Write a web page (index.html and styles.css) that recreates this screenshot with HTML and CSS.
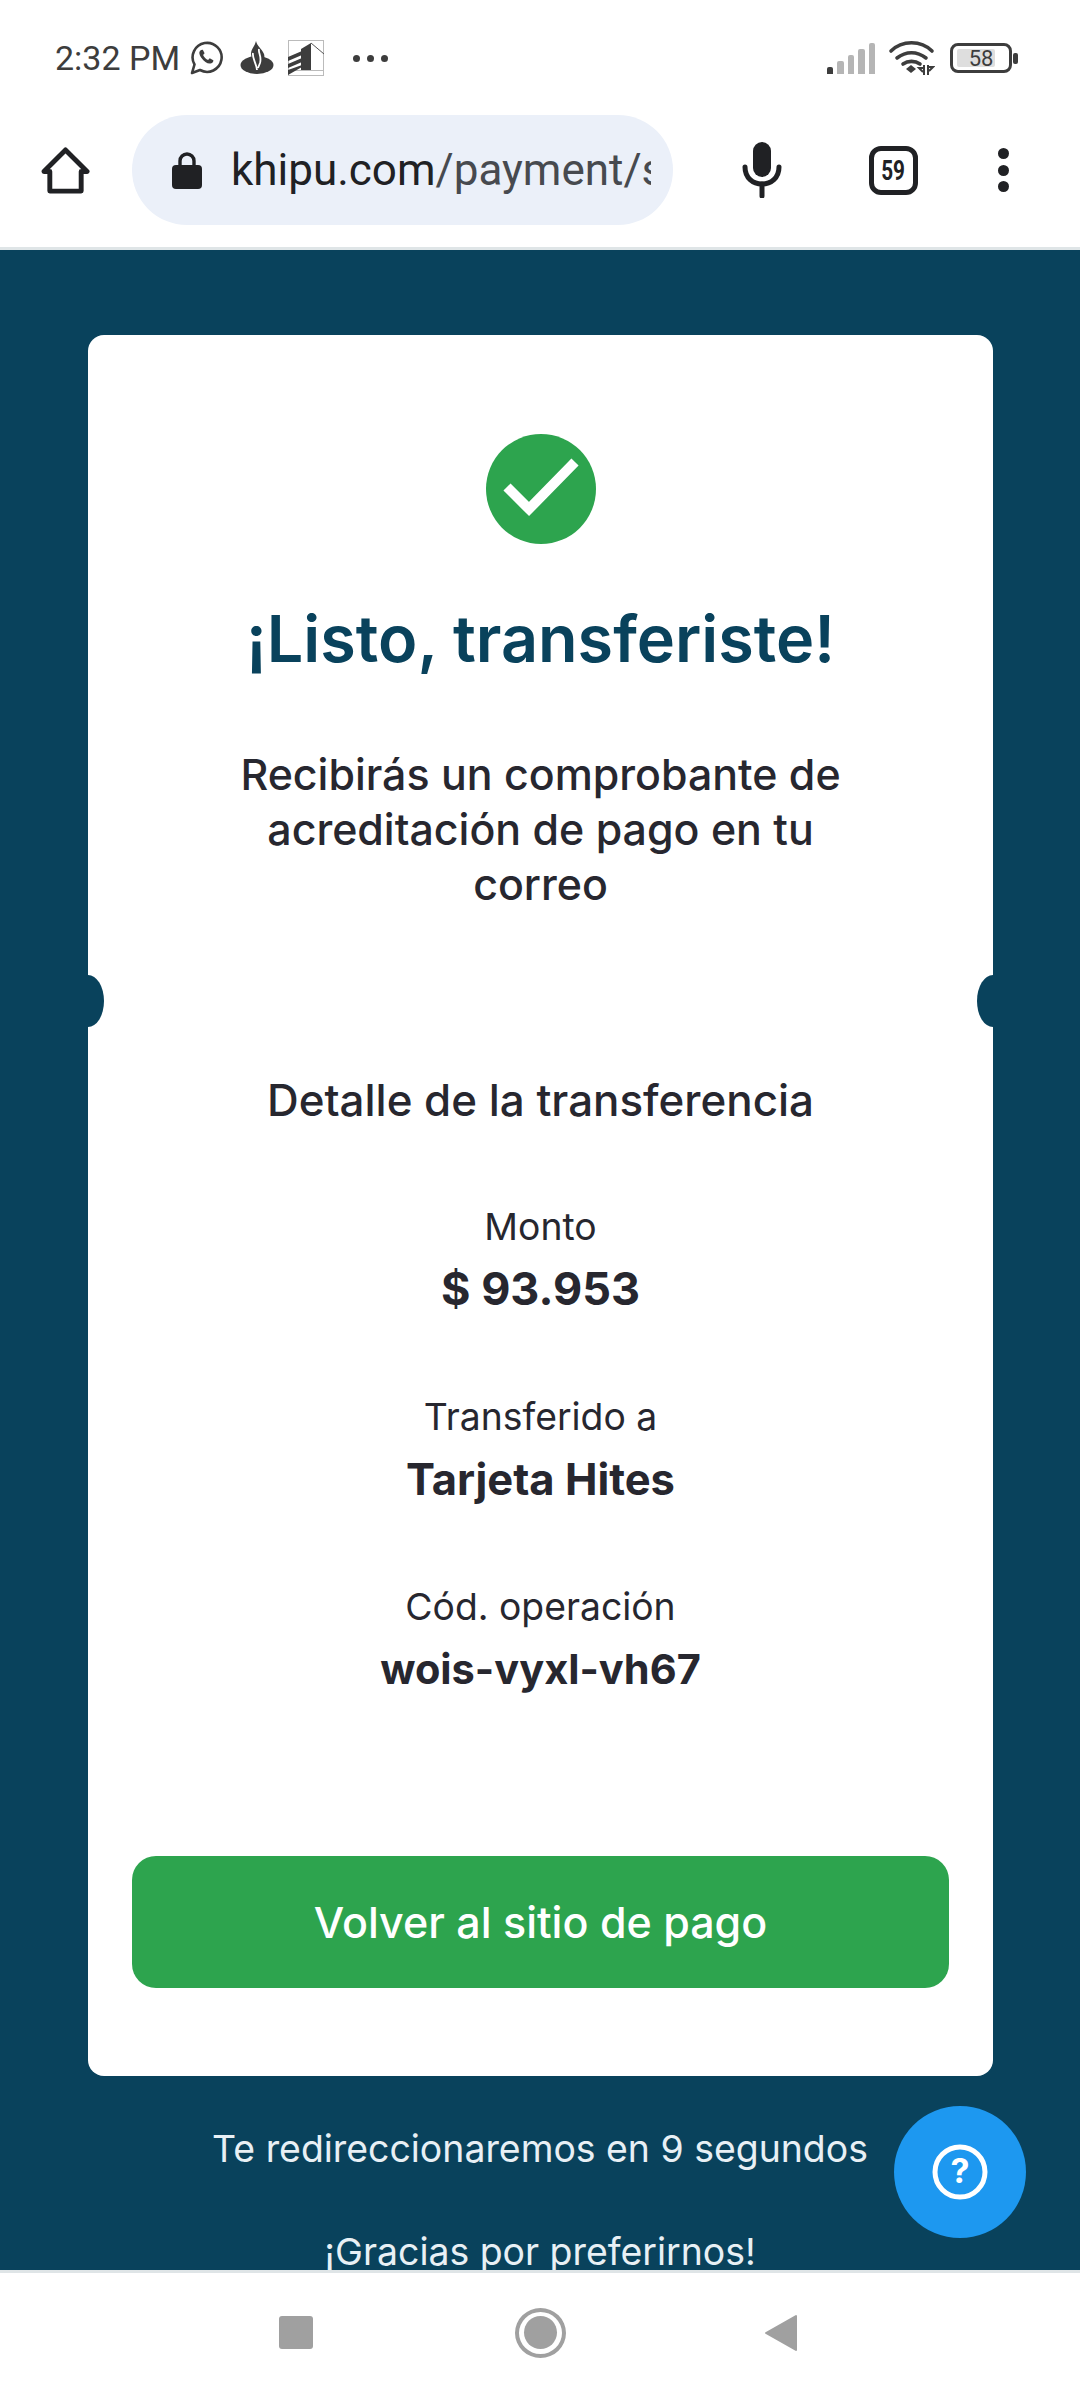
FILE: index.html
```html
<!DOCTYPE html>
<html lang="es">

<head>
    <meta charset="utf-8">
    <meta name="viewport" content="width=device-width, initial-scale=1.0">
    <title>Khipu</title>
    <link rel="stylesheet" href="styles.css">
</head>

<body>

    <section class="status">
        <div class="status-left">
            <span class="hora">2:32 PM</span>
            <svg class="ic-wa" viewBox="0 0 34 34"><path d="M3 32l2.500-8.500A14.500 14.500 0 1 1 11 29Z" fill="none" stroke="#3d3d3d" stroke-width="2.600" stroke-linejoin="round"/><path d="M12 9c-2.500 1.500-2 4.500 .5 8 2.500 3.500 6 6 9 5.500 2.500-.4 3.200-2.400 2.800-3.300l-3.600-1.900-1.600 1.600c-2-.7-4.200-2.900-5-5l1.500-1.700L13.800 8.800Z" fill="#3d3d3d"/></svg>
            <svg class="ic-san" viewBox="0 0 34 34"><ellipse cx="17" cy="24" rx="16.500" ry="9" fill="#3d3d3d"/><path d="M16 0c1 5 6 8 8 13 1 3 0 6-2 9l-3 6c-2-4-8-9-8-15 0-5 4-8 5-13Z" fill="#3d3d3d"/><path d="M13 12c-1 5 3 9 4 17M19 8c-1 4 3 7 1 14l-2 5" fill="none" stroke="#fff" stroke-width="1.800"/></svg>
            <svg class="ic-ban" viewBox="0 0 36 36"><rect x=".5" y=".5" width="35" height="35" fill="none" stroke="#bbb"/><path d="M0 30.500h36" stroke="#bbb"/><path d="M23 3l13 11" stroke="#555"/><path d="M13 9l10-6v27H13Z" fill="#3d3d3d"/><path d="M0 17l14-6v4L0 21Zm0 7l14-6v4L0 28Zm0 6l14-5v2L0 35Z" fill="#3d3d3d"/></svg>
            <span class="puntos"><i></i><i></i><i></i></span>
        </div>
        <div class="status-right">
            <span class="senal"><i></i><i></i><i></i><i></i><i></i></span>
            <svg class="ic-wifi" viewBox="0 0 47 36"><path d="M3 11C14 0 33 0 44 11M9 18c9-7 20-7 29 0M15 24c5-3.500 12-3.500 17 0" fill="none" stroke="#3d3d3d" stroke-width="3.600" stroke-linecap="round"/><path d="M23 25l5 4-5 4-5-4Z" fill="#3d3d3d"/><path d="M36 25v10M35 28h-4l4 4M40 25v10M41 27h4l-4 4" fill="none" stroke="#3d3d3d" stroke-width="2"/></svg>
            <span class="bateria"><span class="nivel"></span><span class="pct">58</span></span>
            <span class="polo"></span>
        </div>
    </section>

    <nav class="toolbar">
        <svg class="ic-home" viewBox="0 0 50 50"><path d="M3 26L25 4l22 22h-6v20H9V26Z" fill="none" stroke="#202124" stroke-width="5" stroke-linejoin="round"/></svg>
        <div class="url">
            <svg class="ic-lock" viewBox="0 0 30 38"><path d="M8 15V10a7 7 0 0 1 14 0v5" fill="none" stroke="#202124" stroke-width="3.400"/><rect y="14" x="0" width="30" height="24" rx="4" fill="#202124"/></svg>
            <div class="url-txt"><span class="dominio">khipu.com</span>/payment/s</div>
        </div>
        <svg class="ic-mic" viewBox="0 0 40 56"><rect x="11" y="0" width="18" height="35" rx="9" fill="#202124"/><path d="M3 25c0 11 8 17 17 17s17-6 17-17" fill="none" stroke="#202124" stroke-width="5" stroke-linecap="round"/><path d="M20 42v12" stroke="#202124" stroke-width="5" stroke-linecap="round"/></svg>
        <div class="tabs"><span>59</span></div>
        <div class="menu-dots"><i></i><i></i><i></i></div>
    </nav>

    <main class="contenido">
        <article class="tarjeta">
            <span class="muesca izq"></span>
            <span class="muesca der"></span>
            <div class="check">
                <svg viewBox="0 0 110 110"><path d="M21 53l22 22 46-47" fill="none" stroke="#fff" stroke-width="10"/></svg>
            </div>
            <h1>¡Listo, transferiste!</h1>
            <p class="aviso">Recibirás un comprobante de acreditación de pago en tu correo</p>
            <h2>Detalle de la transferencia</h2>
            <div class="dato">
                <p class="etiqueta">Monto</p>
                <p class="valor monto">$ 93.953</p>
            </div>
            <div class="dato">
                <p class="etiqueta">Transferido a</p>
                <p class="valor">Tarjeta Hites</p>
            </div>
            <div class="dato">
                <p class="etiqueta">Cód. operación</p>
                <p class="valor codigo">wois-vyxl-vh67</p>
            </div>
            <a class="boton" href="#">Volver al sitio de pago</a>
        </article>
        <p class="redir">Te redireccionaremos en 9 segundos</p>
        <p class="gracias">¡Gracias por preferirnos!</p>
        <button class="ayuda">
            <svg viewBox="0 0 56 56"><circle cx="28" cy="28" r="25" fill="none" stroke="#fff" stroke-width="5"/><text x="28" y="39" text-anchor="middle" class="ayuda-q">?</text></svg>
        </button>
    </main>

    <footer class="navbar">
        <span class="nav-cuadro"></span>
        <span class="nav-circulo"><i></i></span>
        <svg class="nav-atras" viewBox="0 0 34 38"><path d="M32 2v34L2 19Z" fill="#a0a0a0" stroke="#a0a0a0" stroke-width="2" stroke-linejoin="round"/></svg>
    </footer>

</body>

</html>
```

FILE: styles.css
```css
* {
    box-sizing: border-box;
}

body {
    margin: 0;
    width: 1080px;
    height: 2400px;
    overflow: hidden;
    background: #fff;
    font-family: Inter, "Liberation Sans", sans-serif;
    display: flex;
    flex-direction: column;
}

/* barra de estado */
.status {
    height: 80px;
    padding: 40px 0 0 55px;
    display: flex;
    justify-content: space-between;
    align-items: flex-start;
}

.status-left,
.status-right {
    display: flex;
    align-items: center;
    height: 36px;
}

.hora {
    font-family: Roboto, sans-serif;
    font-size: 34px;
    color: #3d3d3d;
    width: 134px;
}

.ic-wa {
    width: 34px;
    height: 34px;
}

.ic-san {
    width: 34px;
    height: 34px;
    margin-left: 17px;
}

.ic-ban {
    width: 36px;
    height: 36px;
    margin-left: 14px;
}

.puntos {
    display: flex;
    gap: 7px;
    margin-left: 29px;
}

.puntos i {
    width: 7px;
    height: 7px;
    border-radius: 50%;
    background: #3d3d3d;
}

.status-right {
    padding-right: 62px;
}

.senal {
    display: flex;
    gap: 4px;
    align-items: flex-end;
    height: 31px;
}

.senal i {
    width: 6.500px;
    background: #b5b5b5;
    border-radius: 2px 2px 0 0;
}

.senal i:nth-child(1) { height: 7px; background: #3d3d3d; }
.senal i:nth-child(2) { height: 13px; }
.senal i:nth-child(3) { height: 19px; }
.senal i:nth-child(4) { height: 25px; }
.senal i:nth-child(5) { height: 31px; }

.ic-wifi {
    width: 47px;
    height: 36px;
    margin-left: 13px;
}

.bateria {
    position: relative;
    width: 62px;
    height: 30px;
    border: 3px solid #3d3d3d;
    border-radius: 8px;
    margin-left: 15px;
    display: flex;
    align-items: center;
    justify-content: center;
}

.nivel {
    position: absolute;
    left: 4px;
    top: 3px;
    bottom: 3px;
    width: 38px;
    background: #dedede;
    border-radius: 2px;
}

.pct {
    position: relative;
    font-family: Roboto, sans-serif;
    font-size: 22px;
    color: #3d3d3d;
}

.polo {
    width: 5px;
    height: 11px;
    margin-left: 1px;
    background: #3d3d3d;
    border-radius: 2px;
}

/* barra del navegador */
.toolbar {
    height: 167px;
    display: flex;
    align-items: center;
    padding: 13px 0 0 41px;
}

.ic-home {
    width: 49px;
    height: 49px;
    flex: none;
}

.url {
    width: 541px;
    height: 110px;
    margin-left: 42px;
    flex: none;
    border-radius: 55px;
    background: #ebf0f9;
    display: flex;
    align-items: center;
    padding-left: 40px;
    overflow: hidden;
}

.ic-lock {
    width: 30px;
    height: 38px;
    flex: none;
}

.url-txt {
    width: 420px;
    margin-left: 29px;
    overflow: hidden;
    white-space: nowrap;
    font-family: Roboto, sans-serif;
    font-size: 44px;
    color: #474a4f;
}

.dominio {
    color: #202124;
}

.ic-mic {
    width: 40px;
    height: 56px;
    margin-left: 69px;
    flex: none;
}

.tabs {
    width: 49px;
    height: 49px;
    margin-left: 87px;
    flex: none;
    border: 5px solid #202124;
    border-radius: 12px;
    display: flex;
    align-items: center;
    justify-content: center;
    font-family: Roboto, sans-serif;
    font-size: 28px;
    font-weight: 700;
    color: #202124;
}

.tabs span {
    transform: scaleX(.74);
}

.menu-dots {
    display: flex;
    flex-direction: column;
    gap: 5.500px;
    margin-left: 80px;
}

.menu-dots i {
    width: 11px;
    height: 11px;
    border-radius: 50%;
    background: #202124;
}

/* contenido */
.contenido {
    position: relative;
    height: 2023px;
    flex: none;
    overflow: hidden;
    border-top: 3px solid #dfe5e7;
    background: #09425c;
    padding-top: 85px;
    text-align: center;
}

.tarjeta {
    position: relative;
    width: 905px;
    height: 1741px;
    margin: 0 0 0 88px;
    background: #fff;
    border-radius: 16px;
    padding-top: 99px;
    overflow: hidden;
    color: #27272f;
}

.muesca {
    position: absolute;
    top: 640px;
    width: 32px;
    height: 52px;
    background: #09425c;
    border-radius: 50%;
}

.muesca.izq {
    left: -16px;
}

.muesca.der {
    right: -16px;
}

.check {
    width: 110px;
    height: 110px;
    margin: 0 auto;
    border-radius: 50%;
    background: #2da44e;
}

.check svg {
    display: block;
}

h1 {
    margin: 55px 0 0;
    font-size: 64.700px;
    line-height: 80px;
    font-weight: 600;
    color: #09425c;
}

.aviso {
    width: 640px;
    margin: 68px auto 0;
    font-size: 42.900px;
    line-height: 55px;
    font-weight: 500;
}

h2 {
    margin: 161px 0 0;
    font-size: 43.900px;
    line-height: 55px;
    font-weight: 500;
}

.dato {
    margin-top: 77px;
}

.dato + .dato {
    margin-top: 79px;
}

.etiqueta {
    margin: 0;
    font-size: 37.300px;
    line-height: 44px;
}

.valor {
    margin: 13px 0 0;
    font-size: 43.500px;
    line-height: 54px;
    font-weight: 700;
}

.monto {
    font-size: 45px;
}

.codigo {
    font-size: 41.500px;
}

.boton {
    display: block;
    width: 817px;
    height: 132px;
    margin: 160px auto 0;
    border-radius: 24px;
    background: #2da44e;
    color: #fff;
    font-size: 43px;
    line-height: 132px;
    font-weight: 500;
    text-decoration: none;
}

.redir,
.gracias {
    margin: 0;
    color: #e8f0f5;
    font-size: 37.400px;
    line-height: 44px;
}

.redir {
    margin-top: 51px;
}

.gracias {
    margin-top: 59px;
}

.ayuda {
    position: absolute;
    left: 894px;
    top: 1856px;
    width: 132px;
    height: 132px;
    border: 0;
    border-radius: 50%;
    background: #1d98f0;
    padding: 0;
    display: flex;
    align-items: center;
    justify-content: center;
}

.ayuda svg {
    width: 56px;
    height: 56px;
}

.ayuda-q {
    font-family: Inter, sans-serif;
    font-size: 34px;
    font-weight: 700;
    fill: #fff;
}

/* barra inferior */
.navbar {
    flex: 1;
    border-top: 3px solid #dfe5e7;
    display: flex;
    align-items: center;
    padding: 0 0 8px 279px;
}

.nav-cuadro {
    width: 34px;
    height: 33px;
    border-radius: 3px;
    background: #a0a0a0;
}

.nav-circulo {
    width: 51px;
    height: 50px;
    margin-left: 202px;
    border-radius: 50%;
    border: 4px solid #a0a0a0;
    display: flex;
    align-items: center;
    justify-content: center;
}

.nav-circulo i {
    width: 33px;
    height: 33px;
    border-radius: 50%;
    background: #a0a0a0;
}

.nav-atras {
    width: 34px;
    height: 38px;
    margin-left: 198px;
}
```
